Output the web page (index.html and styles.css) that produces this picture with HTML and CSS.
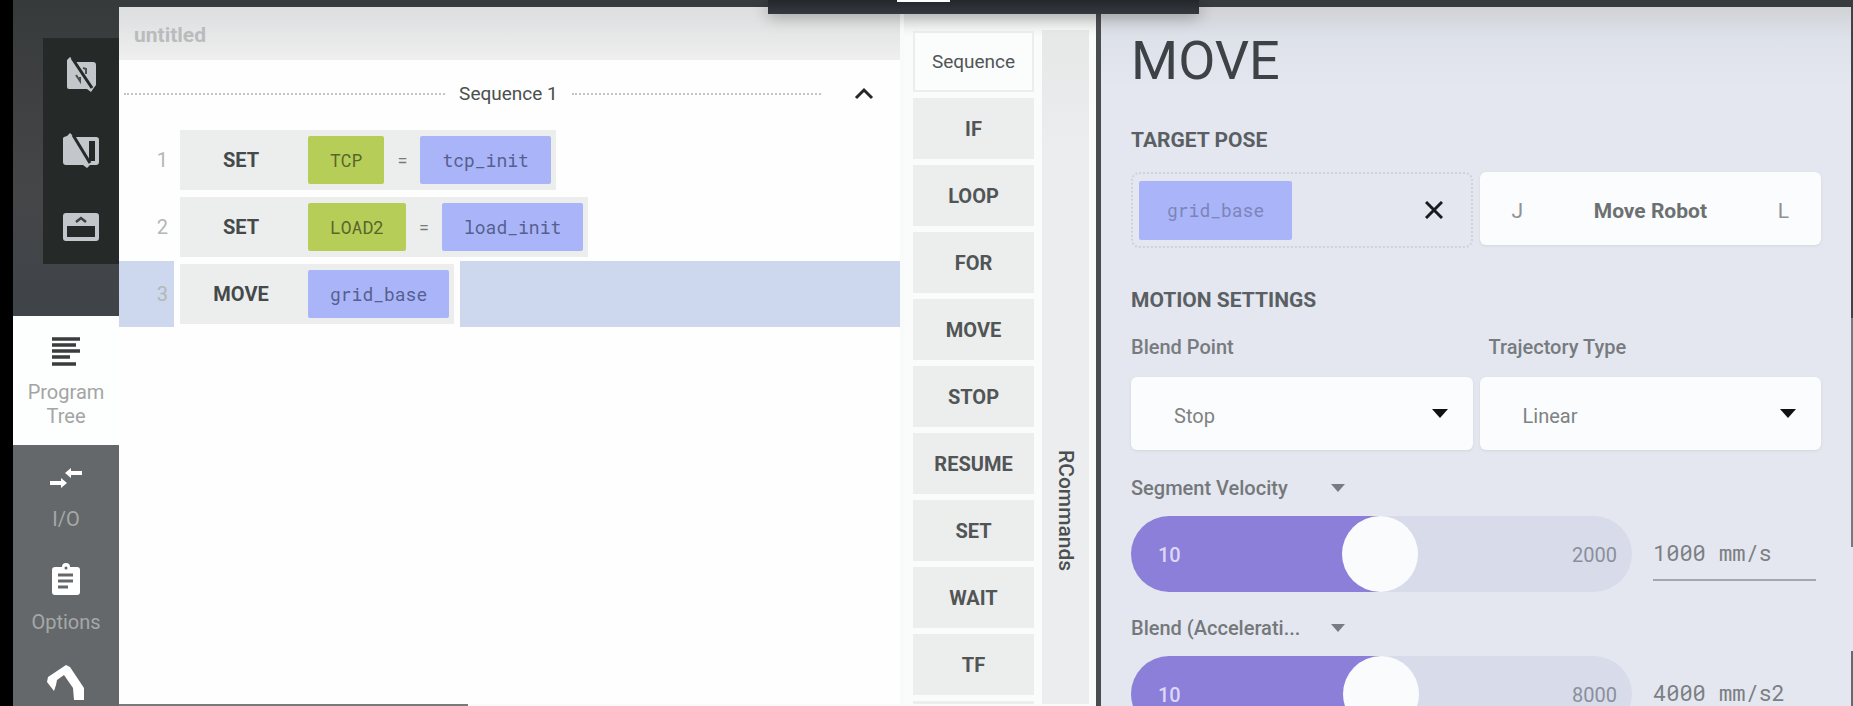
FILE: index.html
```html
<!DOCTYPE html>
<html lang="en">
<head>
<meta charset="utf-8">
<title>Program Tree - untitled</title>
<link rel="stylesheet" href="styles.css">
</head>
<body>
<div class="app">
  <aside class="sidebar">
    <div class="sidebar-top">
      <div class="view-tools">
        <button class="tool" aria-label="Hide camera view">
          <svg width="36" height="36" viewBox="0 0 36 36"><path fill="#c3c7cb" d="M4 3l3-3 5 5h18a3 3 0 0 1 3 3v20l-3 4-2 3-4-3H6a2 2 0 0 1-2-2z"/><path stroke="#252928" stroke-width="3" fill="none" d="M9 1l20 30"/><path stroke="#4a4e4e" stroke-width="2" fill="none" d="M13 18l4 6v-4M20 11l3 1v5"/></svg>
        </button>
        <button class="tool" aria-label="Hide side panel">
          <svg width="36" height="36" viewBox="0 0 36 36"><path fill="#c3c7cb" d="M1 4l3-1 3-3 4 4h22a3 3 0 0 1 3 3v22a3 3 0 0 1-3 3h-6l-3 3-4-3H3a3 3 0 0 1-3-3V5z"/><path fill="#252928" d="M26 8h6v20h-6z"/><path stroke="#252928" stroke-width="3" fill="none" d="M10 2l17 28"/></svg>
        </button>
        <button class="tool" aria-label="Toggle top bar">
          <svg width="36" height="36" viewBox="0 0 36 36"><path fill="#c3c7cb" fill-rule="evenodd" d="M3 4h30a3 3 0 0 1 3 3v22a3 3 0 0 1-3 3H3a3 3 0 0 1-3-3V7a3 3 0 0 1 3-3zm1 13v11h28V17z"/><path stroke="#3c4040" stroke-width="2.500" fill="none" d="M13 13l5-4 5 4"/></svg>
        </button>
      </div>
    </div>
    <nav class="nav">
      <button class="nav-item nav-item-active">
        <svg width="28" height="30" viewBox="0 0 28 30"><path stroke="#3a3d3d" stroke-width="3.500" fill="none" d="M0 2h28M0 8h24M0 14h28M0 20h18M0 27h24"/></svg>
        <span>Program Tree</span>
      </button>
      <button class="nav-item nav-item-io">
        <svg width="32" height="20" viewBox="0 0 32 20"><path fill="#fff" d="M15 5l6-5v3h11v4H21v3zM0 13h11v-3l6 5-6 5v-3H0z"/></svg>
        <span>I/O</span>
      </button>
      <button class="nav-item nav-item-options">
        <svg width="28" height="32" viewBox="0 0 28 32"><path fill="#fff" d="M3 4h7a4 4 0 0 1 8 0h7a3 3 0 0 1 3 3v22a3 3 0 0 1-3 3H3a3 3 0 0 1-3-3V7a3 3 0 0 1 3-3z"/><circle cx="14" cy="5" r="1.500" fill="#64686a"/><path stroke="#64686a" stroke-width="3" fill="none" d="M6 12h15M6 18h15M6 24h10"/></svg>
        <span>Options</span>
      </button>
      <button class="nav-item nav-item-robot" aria-label="Robot">
        <svg width="38" height="36" viewBox="0 0 38 36"><path fill="#fff" d="M19 0l4 2 10 15 4 6v12H27l-1-12-9-13-7 5-1 5-2 6-7-9 1-5z"/></svg>
      </button>
    </nav>
  </aside>

  <main class="program">
    <section class="tree">
      <header class="tree-title">untitled</header>
      <div class="sequence">
        <span class="rule"></span>
        <span class="sequence-name">Sequence 1</span>
        <span class="rule rule-end"></span>
        <button class="collapse" aria-label="Collapse sequence">
          <svg width="20" height="14" viewBox="0 0 20 14"><path stroke="#262829" stroke-width="3" fill="none" d="M2 11l8-8 8 8"/></svg>
        </button>
      </div>
      <ol class="steps">
        <li class="step"><span class="line">1</span><div class="block"><b class="command">SET</b><span class="chip chip-var">TCP</span><span class="equals">=</span><span class="chip">tcp_init</span></div></li>
        <li class="step"><span class="line">2</span><div class="block"><b class="command">SET</b><span class="chip chip-var">LOAD2</span><span class="equals">=</span><span class="chip">load_init</span></div></li>
        <li class="step step-selected"><span class="line">3</span><div class="block"><b class="command">MOVE</b><span class="chip">grid_base</span></div></li>
      </ol>
    </section>
    <section class="palette">
      <button class="palette-item palette-sequence">Sequence</button>
      <button class="palette-item">IF</button>
      <button class="palette-item">LOOP</button>
      <button class="palette-item">FOR</button>
      <button class="palette-item">MOVE</button>
      <button class="palette-item">STOP</button>
      <button class="palette-item">RESUME</button>
      <button class="palette-item">SET</button>
      <button class="palette-item">WAIT</button>
      <button class="palette-item">TF</button>
      <div class="palette-item"></div>
    </section>
    <button class="palette-tab">RCommands</button>
  </main>

  <section class="inspector">
    <h1 class="title">MOVE</h1>
    <h2 class="heading">TARGET POSE</h2>
    <div class="pair">
      <div class="pose">
        <span class="pose-chip">grid_base</span>
        <button class="clear" aria-label="Clear target pose">
          <svg width="18" height="18" viewBox="0 0 18 18"><path stroke="#191b1d" stroke-width="3" fill="none" d="M1 1l16 16M17 1L1 17"/></svg>
        </button>
      </div>
      <button class="move-robot"><span class="axis">J</span><b>Move Robot</b><span class="axis">L</span></button>
    </div>
    <h2 class="heading heading-motion">MOTION SETTINGS</h2>
    <div class="pair">
      <div class="field">
        <label class="label" for="blend">Blend Point</label>
        <div class="select-box">
          <select id="blend" class="select"><option>Stop</option></select>
          <span class="caret"></span>
        </div>
      </div>
      <div class="field">
        <label class="label label-inset" for="trajectory">Trajectory Type</label>
        <div class="select-box">
          <select id="trajectory" class="select"><option>Linear</option></select>
          <span class="caret"></span>
        </div>
      </div>
    </div>
    <div class="slider-field">
      <label class="slider-label" for="velocity"><span class="slider-name">Segment Velocity</span><span class="caret-small"></span></label>
      <div class="slider-row">
        <div class="slider">
          <input id="velocity" class="range" type="range" min="10" max="2000" value="1000">
          <span class="bound bound-min">10</span><span class="bound bound-max">2000</span>
        </div>
        <input class="value" type="text" value="1000 mm/s" aria-label="Segment velocity value">
      </div>
    </div>
    <div class="slider-field">
      <label class="slider-label" for="acceleration"><span class="slider-name">Blend (Accelerati...</span><span class="caret-small"></span></label>
      <div class="slider-row">
        <div class="slider">
          <input id="acceleration" class="range" type="range" min="10" max="8000" value="4000">
          <span class="bound bound-min">10</span><span class="bound bound-max">8000</span>
        </div>
        <input class="value" type="text" value="4000 mm/s2" aria-label="Acceleration value">
      </div>
    </div>
  </section>
  <div class="edge"></div>
  <div class="drawer"><span class="drawer-grip"></span></div>
</div>
</body>
</html>
```

FILE: styles.css
```css
* { box-sizing: border-box; }

body {
  margin: 0;
  font-family: Roboto, sans-serif;
  font-size: 20px;
  color: #4b4f50;
  background: #373b3d;
}

button, input, select { font: inherit; color: inherit; border: 0; padding: 0; background: none; }
h1, h2, ol { margin: 0; padding: 0; }
ol { list-style: none; }
svg { display: block; flex: none; }

.app {
  position: relative;
  display: grid;
  grid-template-columns: 119px minmax(0, 977fr) minmax(0, 755fr) 2px;
  grid-template-rows: minmax(0, 1fr);
  height: 100vh;
  padding-top: 7px;
  overflow: hidden;
}

/* Sidebar */
.sidebar {
  display: flex;
  flex-direction: column;
  margin-top: -7px;
  border-left: 13px solid #000;
  background: #64686a;
}
.sidebar-top {
  padding: 38px 0 52px 30px;
  background: linear-gradient(#373a3b, #454648 60%, #3f4449);
}
.view-tools {
  display: flex;
  flex-direction: column;
  align-items: center;
  gap: 40px;
  padding: 19px 0;
  background: #252928;
}
.nav { display: flex; flex-direction: column; }
.nav-item {
  display: flex;
  flex-direction: column;
  align-items: center;
  line-height: 24px;
  color: #a4a8a9;
}
.nav-item-active { gap: 13px; padding: 21px 12px 17px; color: #a3a5a4; background: #fdfefe; }
.nav-item-io { gap: 19px; padding-top: 23px; }
.nav-item-options { gap: 15px; padding-top: 32px; }
.nav-item-robot { padding-top: 31px; }

/* Program tree */
.program {
  min-width: 0;
  display: flex;
  background: linear-gradient(#dfe0e1, #fafbfb 30px);
  border-bottom: 2px solid;
  border-image: linear-gradient(to right, #77797b 350px, #fafafa 350px) 2;
}
.tree {
  flex: 1;
  min-width: 0;
  background: #fdfefd;
  border-right: 4px solid #f9fafa;
}
.tree-title {
  height: 53px;
  padding: 16px 15px;
  line-height: 24px;
  font-size: 21px;
  font-weight: 700;
  color: #b9bcbc;
  background: linear-gradient(#dcdedf, #eeefee);
}
.sequence { display: flex; align-items: center; height: 67px; padding-left: 5px; }
.rule { flex: 322 1 0; border-top: 2px dotted #c3c5c4; }
.rule-end { flex-grow: 250; }
.sequence-name { padding: 0 14px; font-size: 19px; }
.collapse { width: 79px; display: flex; justify-content: center; padding-left: 7px; }
.steps { display: flex; flex-direction: column; gap: 1px; }
.step { display: flex; align-items: center; height: 66px; }
.line { width: 49px; margin-right: 6px; text-align: right; color: #b4b7b6; }
.block {
  display: flex;
  align-items: center;
  height: 66px;
  padding: 0 5px 0 0;
  border: solid #fdfefd;
  border-width: 3px 6px;
  background: #eceeee;
}
.step-selected { background: #cdd7ee; }
.command { width: 122px; margin-right: 6px; text-align: center; font-weight: 700; color: #45494a; }
.chip {
  padding: 0 22px;
  line-height: 48px;
  border-radius: 2px;
  font-family: "Roboto Mono", "DejaVu Sans Mono", monospace;
  font-size: 18px;
  color: #565f8f;
  background: #a9b5f8;
}
.chip-var { color: #57662d; background: #b6cd57; }
.equals { width: 36px; text-align: center; font-size: 18px; color: #777a7a; }

/* Command palette */
.palette { width: 136px; padding: 24px 6px 0 9px; display: flex; flex-direction: column; gap: 6px; overflow: hidden; }
.palette-item { flex: none; height: 61px; font-weight: 700; color: #515556; background: #eceded; }
.palette-sequence { font-size: 19px; font-weight: 400; border: 2px solid #eceded; background: #fbfcfc; }
.palette-tab {
  display: flex;
  align-items: center;
  flex: 0 0 47px;
  margin: 23px 7px 0 2px;
  padding-top: 420px;
  justify-content: flex-start;
  writing-mode: vertical-rl;
  font-size: 21px;
  font-weight: 500;
  color: #4b4f50;
  background: linear-gradient(#e6e7e7, #ecedee 120px);
}

/* Inspector */
.inspector {
  min-width: 0;
  padding: 22px 30px 0;
  border-left: 5px solid #4a4d50;
  background: linear-gradient(#d0d2d5, #dde1e9 30px, #e4e7ef 80px);
}
.title { line-height: 64px; font-size: 54px; font-weight: 400; color: #3d4246; }
.heading { margin-top: 34px; line-height: 26px; font-size: 21px; font-weight: 700; color: #5a5f64; }
.heading-motion { margin-top: 39px; }
.heading + .pair { margin-top: 19px; }
.heading-motion + .pair { margin-top: 21px; }
.pair { display: grid; grid-template-columns: 1fr 1fr; gap: 7px; align-items: start; }
.pose {
  display: flex;
  align-items: center;
  justify-content: space-between;
  height: 76px;
  padding: 0 28px 0 6px;
  border: 2px dotted #cfd3d8;
  border-radius: 8px;
}
.pose-chip {
  padding: 0 28px;
  line-height: 59px;
  border-radius: 2px;
  font-family: "Roboto Mono", "DejaVu Sans Mono", monospace;
  font-size: 18px;
  color: #7c84b8;
  background: #a9b5f8;
}
.move-robot {
  display: flex;
  align-items: center;
  justify-content: space-between;
  height: 73px;
  padding: 4px 32px 0;
  border-radius: 6px;
  font-size: 21px;
  color: #6d7071;
  background: #fafcfd;
  box-shadow: 0 1px 3px #d3d6db;
}
.move-robot b { font-weight: 700; }
.axis { color: #8f9293; }
.label { display: block; line-height: 26px; font-weight: 500; color: #777b80; }
.label-inset { padding-left: 9px; }
.select-box { display: flex; align-items: center; position: relative; margin-top: 17px; }
.select {
  appearance: none;
  width: 100%;
  height: 73px;
  padding: 5px 43px 0;
  border-radius: 6px;
  color: #7f8283;
  background: #fafcfd;
  box-shadow: 0 1px 3px #d3d6db;
}
.caret {
  position: absolute;
  right: 25px;
  border: solid transparent;
  border-width: 9px 8px 0;
  border-top-color: #101112;
}

.slider-field { margin-top: 21px; }
.pair + .slider-field { margin-top: 23px; }
.slider-label { display: flex; align-items: center; line-height: 30px; font-weight: 500; color: #74787c; }
.slider-name { width: 172px; margin-right: 28px; white-space: nowrap; }
.caret-small { border: solid transparent; border-width: 8px 7px 0; border-top-color: #777b84; }
.slider-row { display: flex; align-items: flex-end; gap: 21px; margin-top: 13px; padding-right: 5px; }
.slider { position: relative; flex: 1; height: 76px; }
.range {
  appearance: none;
  display: block;
  width: 100%;
  height: 76px;
  margin: 0;
  border-radius: 38px;
  background: linear-gradient(to right, #8c7fd9 50%, #d8dcea 50%);
}
.range::-webkit-slider-thumb {
  appearance: none;
  width: 76px;
  height: 76px;
  border-radius: 50%;
  background: #fafbfc;
}
.bound { position: absolute; top: 0; line-height: 78px; pointer-events: none; }
.bound-min { left: 27px; font-weight: 500; color: #dcd8f7; }
.bound-max { right: 15px; color: #8b8f9b; }
.value {
  width: 163px;
  height: 53px;
  margin-bottom: 11px;
  border-bottom: 2px solid #a4a8ae;
  padding-bottom: 2px;
  font-family: "Roboto Mono", "DejaVu Sans Mono", monospace;
  font-size: 22px;
  color: #7b7f84;
}

.edge {
  background: linear-gradient(#3f4345 311px, #77797d 311px 540px, #e4e7ef 540px 644px, #66696d 644px);
}

/* Drawer hanging over the top edge */
.drawer {
  position: absolute;
  top: 0;
  left: 768px;
  width: 431px;
  height: 14px;
  display: flex;
  justify-content: center;
  background: linear-gradient(#23262b, #363940);
  box-shadow: 0 3px 16px #0000004d;
}
.drawer-grip { width: 53px; height: 2px; margin-right: 120px; background: #fff; }
```
